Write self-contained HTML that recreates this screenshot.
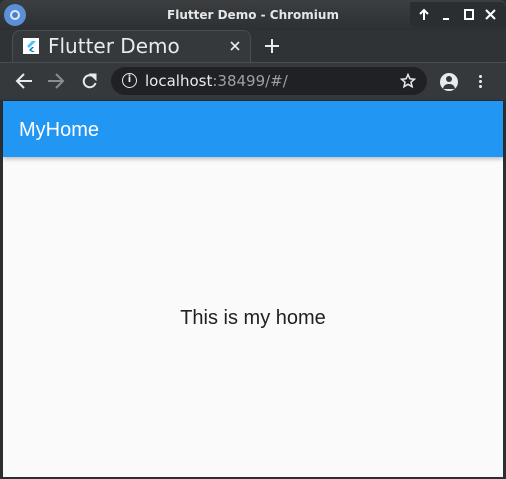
<!DOCTYPE html>
<html><head><style>
*{margin:0;padding:0;box-sizing:border-box}
body{width:506px;height:479px;background:#2b2f31;position:relative;overflow:hidden;font-family:"Liberation Sans","DejaVu Sans",sans-serif}
.abs{position:absolute}
</style></head><body>
<div class="abs" style="left:0;top:0;width:506px;height:30px;background:linear-gradient(#3b3f42,#2c3033);border-radius:6px 6px 0 0"></div>
<div class="abs" style="left:4px;top:4px;width:22px;height:22px;border-radius:50%;background:#5b8fd8"></div>
<div class="abs" style="left:10px;top:10px;width:10px;height:10px;border-radius:50%;border:2px solid #dfe8f5;background:#4a7fcf"></div>
<div class="abs" style="left:0;top:8px;width:506px;text-align:center;color:#e6e6e6;font:bold 12px 'DejaVu Sans',sans-serif">Flutter Demo - Chromium</div>
<div class="abs" style="left:410px;top:2px;width:96px;height:25px;background:#2a2e30;border-radius:0 6px 0 6px"></div>
<svg class="abs" style="left:410px;top:2px" width="96" height="25" fill="none" stroke="#fff" stroke-width="2">
<path d="M14 18V8M10 12l4-4 4 4"/><path d="M33 17h6"/><path d="M55 8h8v9h-8z"/><path d="M76 8l9 9M85 8l-9 9"/></svg>
<div class="abs" style="left:0;top:30px;width:506px;height:33px;background:#2f3336"></div>
<div class="abs" style="left:12px;top:30px;width:239px;height:33px;background:#35393c;border:1px solid #4a4e51;border-bottom:none;border-radius:8px 8px 0 0"></div>
<div class="abs" style="left:0;top:62px;width:506px;height:1px;background:#4a4e51"></div>
<div class="abs" style="left:23px;top:38px;width:16px;height:16px;background:#fff"></div>
<svg class="abs" style="left:23px;top:38px" width="16" height="16"><path d="M9 3 L4 8 L6 10 L13 3Z" fill="#47c5fb"/><path d="M9 9 L6 12 L9 14 L12 14 L8 12 L11 9Z" fill="#0175c2"/></svg>
<div class="abs" style="left:48px;top:34px;color:#e8eaed;font:20px 'DejaVu Sans',sans-serif">Flutter Demo</div>
<svg class="abs" style="left:230px;top:41px" width="10" height="10" stroke="#e8eaed" stroke-width="1.6"><path d="M1 1l8 8M9 1l-8 8"/></svg>
<svg class="abs" style="left:265px;top:39px" width="14" height="14" stroke="#e8eaed" stroke-width="2"><path d="M7 0v14M0 7h14"/></svg>
<div class="abs" style="left:0;top:63px;width:506px;height:37px;background:#35393c"></div>
<svg class="abs" style="left:14px;top:71px" width="90" height="20" fill="none" stroke-width="2">
<path d="M4 10h14M10 3l-7 7 7 7" stroke="#e8eaed"/>
<path d="M34 10h14M42 3l7 7-7 7" stroke="#8a8d90"/>
<path d="M80 6a6 6 0 1 0 1.5 6" stroke="#e8eaed"/><path d="M76 3h6v6z" fill="#e8eaed" stroke="#e8eaed" stroke-width="1"/>
</svg>
<div class="abs" style="left:111px;top:67px;width:316px;height:28px;background:#202124;border-radius:14px"></div>
<div class="abs" style="left:122px;top:73px;width:15px;height:15px;border:1.5px solid #e8eaed;border-radius:50%;color:#e8eaed;font:bold 10px 'DejaVu Sans';text-align:center;line-height:12px">i</div>
<div class="abs" style="left:145px;top:72px;color:#e8eaed;font:15px 'DejaVu Sans'">localhost<span style="color:#9aa0a6">:38499/#/</span></div>
<svg class="abs" style="left:400px;top:73px" width="16" height="16" fill="none" stroke="#e8eaed" stroke-width="1.5"><path d="M8 1.5l1.9 4.3 4.6.4-3.5 3 1.1 4.5L8 11.3l-4 2.4 1-4.5-3.5-3 4.6-.4z"/></svg>
<div class="abs" style="left:440px;top:73px;width:18px;height:18px;border-radius:50%;background:#e8eaed"></div>
<div class="abs" style="left:446px;top:76px;width:6px;height:6px;border-radius:50%;background:#35393c"></div>
<div class="abs" style="left:443px;top:84px;width:12px;height:5px;border-radius:6px 6px 0 0;background:#35393c"></div>
<div class="abs" style="left:479px;top:74px;width:3px;height:14px;background:radial-gradient(circle,#e8eaed 1.4px,transparent 1.6px) 0 0/3px 5px"></div>
<div class="abs" style="left:3px;top:101px;width:500px;height:376px;background:#fafafa"></div>
<div class="abs" style="left:3px;top:101px;width:500px;height:56px;background:#2196f3;box-shadow:0 2px 4px rgba(0,0,0,.25)"></div>
<div class="abs" style="left:19px;top:119px;color:#fff;font:20px 'Liberation Sans',sans-serif">MyHome</div>
<div class="abs" style="left:3px;top:307px;width:500px;text-align:center;color:#212121;font:20px 'Liberation Sans',sans-serif">This is my home</div>
</body></html>
